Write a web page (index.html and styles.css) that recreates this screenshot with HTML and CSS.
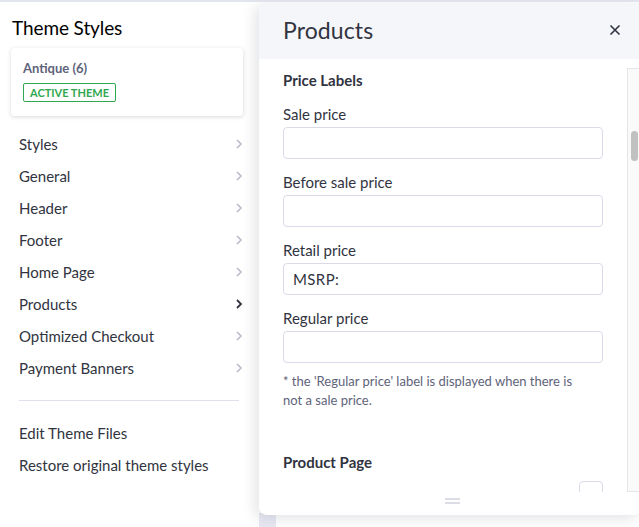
FILE: index.html
```html
<!DOCTYPE html>
<html>
<head>
<meta charset="utf-8">
<link rel="stylesheet" href="styles.css">
</head>
<body>
<div class="page">
  <aside class="sidebar">
    <h1 class="side-title">Theme Styles</h1>
    <div class="theme-card">
      <div class="theme-name">Antique (6)</div>
      <span class="badge">ACTIVE THEME</span>
    </div>
    <ul class="menu">
      <li class="menu-item">Styles<svg class="chev" viewBox="0 0 8 12"><path d="M2 2l4 4-4 4"/></svg></li>
      <li class="menu-item">General<svg class="chev" viewBox="0 0 8 12"><path d="M2 2l4 4-4 4"/></svg></li>
      <li class="menu-item">Header<svg class="chev" viewBox="0 0 8 12"><path d="M2 2l4 4-4 4"/></svg></li>
      <li class="menu-item">Footer<svg class="chev" viewBox="0 0 8 12"><path d="M2 2l4 4-4 4"/></svg></li>
      <li class="menu-item">Home Page<svg class="chev" viewBox="0 0 8 12"><path d="M2 2l4 4-4 4"/></svg></li>
      <li class="menu-item active">Products<svg class="chev" viewBox="0 0 8 12"><path d="M2 2l4 4-4 4"/></svg></li>
      <li class="menu-item">Optimized Checkout<svg class="chev" viewBox="0 0 8 12"><path d="M2 2l4 4-4 4"/></svg></li>
      <li class="menu-item">Payment Banners<svg class="chev" viewBox="0 0 8 12"><path d="M2 2l4 4-4 4"/></svg></li>
    </ul>
    <div class="divider"></div>
    <ul class="links">
      <li class="link">Edit Theme Files</li>
      <li class="link">Restore original theme styles</li>
    </ul>
  </aside>
  <main class="main">
    <div class="main-strip"></div>
  </main>

  <section class="panel">
    <header class="panel-head">
      <h2 class="panel-title">Products</h2>
      <svg class="close" viewBox="0 0 12 12"><path d="M1.5 1.5l9 9M10.5 1.5l-9 9"/></svg>
    </header>
    <div class="panel-body">
      <div class="scroll">
        <h3 class="section">Price Labels</h3>
        <label class="field">
          <span class="label">Sale price</span>
          <span class="input"></span>
        </label>
        <label class="field">
          <span class="label">Before sale price</span>
          <span class="input"></span>
        </label>
        <label class="field">
          <span class="label">Retail price</span>
          <span class="input">MSRP:</span>
        </label>
        <label class="field">
          <span class="label">Regular price</span>
          <span class="input"></span>
        </label>
        <p class="note">* the 'Regular price' label is displayed when there is not a sale price.</p>
        <h3 class="section section-2">Product Page</h3>
        <div class="check-row"><span class="checkbox"></span></div>
      </div>
      <div class="scrollbar"><div class="thumb"></div></div>
    </div>
    <div class="handle"><span></span><span></span></div>
  </section>
</div>
</body>
</html>
```
FILE: styles.css
```css
* { box-sizing: border-box; }
html, body { margin: 0; padding: 0; }
body {
  font-family: Lato, "Noto Sans", sans-serif;
  color: #313440;
  background: #fff;
  width: 639px;
  height: 527px;
  overflow: hidden;
}
.page {
  position: relative;
  display: flex;
  height: 527px;
  border-top: 2px solid #e4e6ef;
}
.sidebar {
  width: 259px;
  flex: none;
  padding: 14px 0 0 0;
}
.side-title {
  margin: 0 0 0 12px;
  font-size: 19px;
  font-weight: 400;
  color: #000;
  line-height: 24px;
  letter-spacing: -0.1px;
}
.theme-card {
  margin: 8px 16px 0 11px;
  width: 232px;
  height: 68px;
  border-radius: 4px;
  background: #fff;
  box-shadow: 0 1px 4px rgba(40, 45, 70, 0.18);
  padding: 12px 12px 0 12px;
}
.theme-name {
  font-size: 13px;
  font-weight: 700;
  color: #5e637a;
  line-height: 16px;
}
.badge {
  display: inline-block;
  margin-top: 7px;
  border: 1px solid #2fa84f;
  border-radius: 2px;
  color: #2fa84f;
  font-size: 11px;
  font-weight: 700;
  line-height: 17px;
  padding: 0 6px;
}
.menu, .links {
  list-style: none;
  margin: 0;
  padding: 0;
}
.menu { margin-top: 12px; }
.menu-item {
  display: flex;
  align-items: center;
  justify-content: space-between;
  height: 32px;
  padding: 0 16px 0 19px;
  font-size: 15px;
}
.chev {
  width: 8px;
  height: 12px;
  fill: none;
  stroke: #b6b9c9;
  stroke-width: 1.5;
}
.active .chev { stroke: #313440; stroke-width: 1.8; }
.divider {
  margin: 16px 20px 0 19px;
  border-top: 1px solid #dfe0ee;
}
.links { margin-top: 16px; }
.link {
  height: 32px;
  line-height: 32px;
  padding-left: 19px;
  font-size: 15px;
}
.main {
  flex: 1;
  position: relative;
}
.main-strip {
  position: absolute;
  left: 0;
  bottom: 0;
  width: 17px;
  height: 14px;
  background: #e8e9f3;
}

/* Panel overlay */
.panel {
  position: absolute;
  left: 259px;
  top: 1px;
  width: 382px;
  height: 512px;
  background: #fff;
  border-radius: 0 0 8px 8px;
  box-shadow: -4px 4px 14px rgba(40, 45, 70, 0.13);
  display: flex;
  flex-direction: column;
  overflow: hidden;
}
.panel-head {
  flex: none;
  height: 56px;
  background: #f5f6fa;
  display: flex;
  align-items: center;
  justify-content: space-between;
  padding: 0 20px 3px 24px;
}
.panel-title {
  margin: 0;
  font-size: 23px;
  font-weight: 400;
  color: #313440;
  letter-spacing: 0.1px;
}
.close {
  width: 12px;
  height: 12px;
  fill: none;
  stroke: #313440;
  stroke-width: 1.6;
}
.panel-body {
  flex: 1;
  display: flex;
  min-height: 0;
  padding-top: 9px;
}
.scroll {
  width: 368px;
  padding: 2px 24px 0 24px;
  overflow: hidden;
  height: 424px;
}
.section {
  margin: 0;
  font-size: 15px;
  font-weight: 700;
  line-height: 20px;
  color: #313440;
}
.field {
  display: flex;
  flex-direction: column;
  margin-top: 13px;
}
.field:first-of-type { margin-top: 14px; }
.label {
  font-size: 15px;
  line-height: 20px;
  color: #313440;
}
.input {
  margin-top: 3px;
  height: 32px;
  width: 320px;
  border: 1px solid #d9dbe9;
  border-radius: 4px;
  font-size: 15px;
  line-height: 30px;
  padding-left: 9px;
  color: #313440;
  letter-spacing: 0.4px;
}
.note {
  margin: 9px 0 0 0;
  width: 310px;
  font-size: 13px;
  line-height: 19px;
  color: #5e637a;
}
.section-2 { margin-top: 42px; }
.check-row {
  display: flex;
  justify-content: flex-end;
  width: 320px;
  margin-top: 9px;
}
.checkbox {
  flex: none;
  width: 24px;
  height: 24px;
  border: 1px solid #d9dbe9;
  border-radius: 4px;
}
.scrollbar {
  width: 14px;
  height: 424px;
  background: #fafafa;
  border-left: 1px solid #e6e6ea;
  border-top: 1px solid #e6e6ea;
  border-bottom: 1px solid #e6e6ea;
  padding: 62px 3px 0 3px;
}
.thumb {
  width: 7px;
  height: 30px;
  background: #c1c1c1;
  border-radius: 4px;
}
.handle {
  flex: none;
  height: 22px;
  display: flex;
  flex-direction: column;
  align-items: center;
  justify-content: center;
  gap: 2px;
  padding-left: 5px;
  padding-bottom: 7px;
}
.handle span {
  width: 15px;
  height: 2px;
  background: #dcdde6;
}
```
